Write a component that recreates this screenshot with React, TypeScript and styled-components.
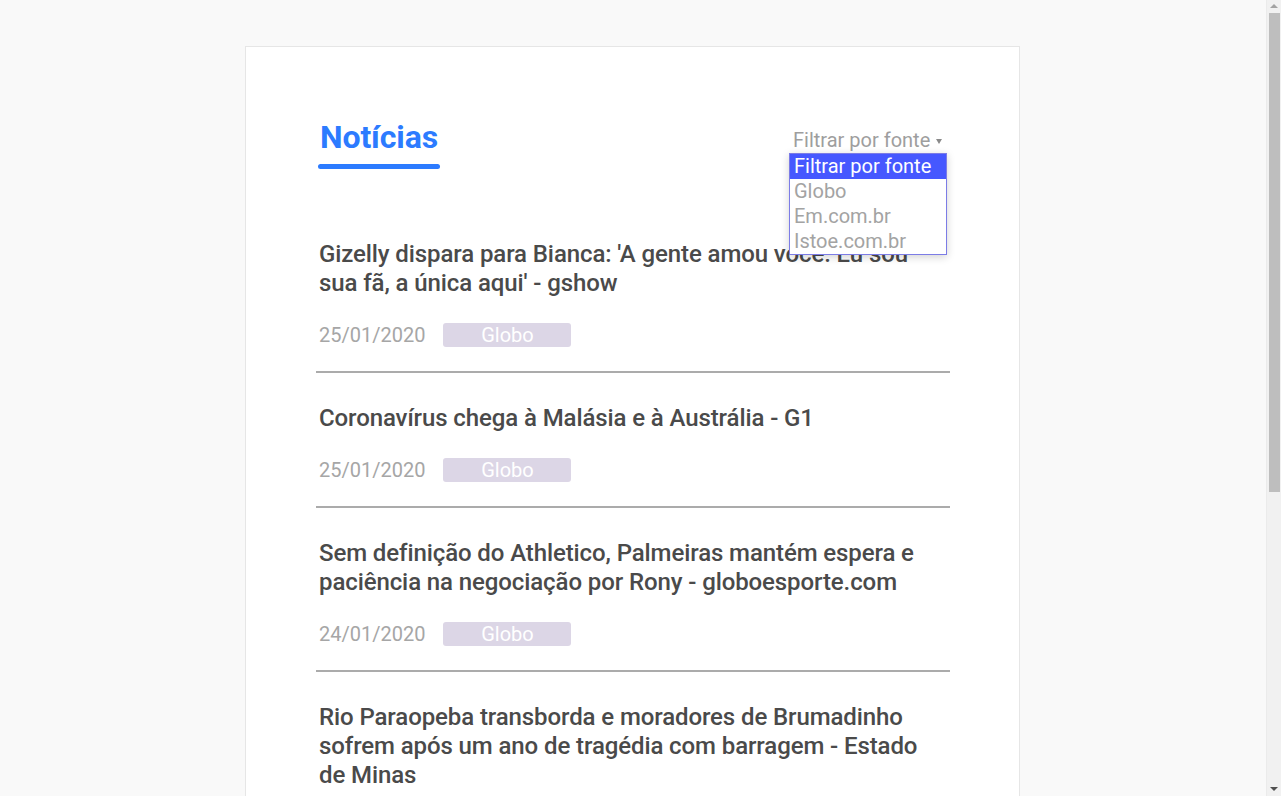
import React from "react";
import styled, { createGlobalStyle } from "styled-components";

const GlobalStyle = createGlobalStyle`
  html, body {
    margin: 0;
    padding: 0;
    background: #f9f9f9;
    font-family: Roboto, "Liberation Sans", sans-serif;
  }
  body { padding-right: 16px; }
  * { box-sizing: border-box; }
`;

const Scrollbar = styled.div`
  position: fixed;
  top: 0;
  right: 0;
  width: 15px;
  height: 100vh;
  background: #f1f1f1;
  border-left: 1px solid #ebebeb;
  display: flex;
  flex-direction: column;
  align-items: center;
  z-index: 10;
`;

const Arrow = styled.span<{ $down?: boolean }>`
  width: 0;
  height: 0;
  border-left: 4px solid transparent;
  border-right: 4px solid transparent;
  ${(p) =>
    p.$down
      ? "border-top: 4px solid #505050; margin-top: auto; margin-bottom: 5px;"
      : "border-bottom: 4px solid #a3a3a3; margin-top: 4px;"}
`;

const Thumb = styled.span`
  width: 11px;
  height: 479px;
  margin-top: 5px;
  background: #bebebe;
`;

const Card = styled.main`
  width: 775px;
  margin: 46px auto 40px;
  background: #ffffff;
  border: 1px solid #e6e6e6;
  padding: 72px 69px 40px 70px;
`;

const Header = styled.header`
  display: flex;
  justify-content: space-between;
  align-items: flex-start;
  padding-right: 3px;
`;

const TitleBlock = styled.div`
  display: flex;
  flex-direction: column;
  align-items: center;
  width: 122px;
  margin-left: 2px;
`;

const Heading = styled.h1`
  margin: 0;
  font-family: Roboto, "Liberation Sans", sans-serif;
  font-weight: 700;
  font-size: 32px;
  line-height: 36px;
  color: #2c7bff;
  letter-spacing: -0.1px;
`;

const Bar = styled.div`
  width: 122px;
  height: 5px;
  margin-top: 9px;
  border-radius: 3px;
  background: #2c7bff;
`;

const SelectWrap = styled.div`
  position: relative;
  width: 158px;
  margin-top: 9px;
`;

const SelectLabel = styled.div`
  display: flex;
  align-items: center;
  gap: 6px;
  font-size: 20px;
  line-height: 24px;
  color: #9e9e9e;
  padding-left: 4px;
`;

const Caret = styled.span`
  width: 0;
  height: 0;
  border-left: 3.5px solid transparent;
  border-right: 3.5px solid transparent;
  border-top: 5px solid #8a8a8a;
  margin-top: 2px;
`;

const Popup = styled.ul`
  position: absolute;
  top: 25px;
  left: 0;
  width: 158px;
  margin: 0;
  padding: 0;
  list-style: none;
  background: #ffffff;
  border: 1px solid #7c7ce6;
  box-shadow: 0 2px 8px rgba(0, 0, 0, 0.18);
  z-index: 5;
`;

const Option = styled.li<{ $selected?: boolean }>`
  height: 25px;
  padding-left: 4px;
  font-size: 20px;
  line-height: 24px;
  color: ${(p) => (p.$selected ? "#ffffff" : "#a3a3a3")};
  background: ${(p) => (p.$selected ? "#4658ff" : "transparent")};
`;

const List = styled.section`
  margin-top: 40px;
`;

const Item = styled.article`
  padding: 31px 0 24px;
  border-bottom: 2px solid #ababab;
`;

const ItemTitle = styled.h2`
  margin: 0;
  padding: 0 30px 0 3px;
  font-size: 24px;
  line-height: 29px;
  font-weight: 500;
  color: #4a4a4a;
  letter-spacing: -0.1px;
`;

const Meta = styled.div`
  display: flex;
  align-items: center;
  gap: 18px;
  margin-top: 25px;
  padding-left: 3px;
  height: 24px;
`;

const DateText = styled.span`
  font-size: 20px;
  line-height: 24px;
  color: #a6a6a6;
  font-weight: 400;
`;

const Badge = styled.span`
  display: inline-flex;
  align-items: center;
  justify-content: center;
  width: 128px;
  height: 24px;
  border-radius: 3px;
  background: #dcd6e6;
  color: #ffffff;
  font-size: 20px;
`;

const news = [
  {
    title: "Gizelly dispara para Bianca: 'A gente amou você. Eu sou sua fã, a única aqui' - gshow",
    date: "25/01/2020",
    source: "Globo",
  },
  {
    title: "Coronavírus chega à Malásia e à Austrália - G1",
    date: "25/01/2020",
    source: "Globo",
  },
  {
    title: "Sem definição do Athletico, Palmeiras mantém espera e paciência na negociação por Rony - globoesporte.com",
    date: "24/01/2020",
    source: "Globo",
  },
  {
    title: "Rio Paraopeba transborda e moradores de Brumadinho sofrem após um ano de tragédia com barragem - Estado de Minas",
    date: "24/01/2020",
    source: "Em.com.br",
  },
  {
    title: "Bolsonaro diz que vai ouvir Moro sobre recriação do Ministério da Segurança - IstoÉ",
    date: "24/01/2020",
    source: "Istoe.com.br",
  },
];

export default function App() {
  return (
    <>
      <GlobalStyle />
      <Card>
        <Header>
          <TitleBlock>
            <Heading>Notícias</Heading>
            <Bar />
          </TitleBlock>
          <SelectWrap>
            <SelectLabel>
              Filtrar por fonte <Caret />
            </SelectLabel>
            <Popup>
              <Option $selected>Filtrar por fonte</Option>
              <Option>Globo</Option>
              <Option>Em.com.br</Option>
              <Option>Istoe.com.br</Option>
            </Popup>
          </SelectWrap>
        </Header>
        <List>
          {news.map((n, i) => (
            <Item key={i}>
              <ItemTitle>{n.title}</ItemTitle>
              <Meta>
                <DateText>{n.date}</DateText>
                <Badge>{n.source}</Badge>
              </Meta>
            </Item>
          ))}
        </List>
      </Card>
      <Scrollbar aria-hidden>
        <Arrow />
        <Thumb />
        <Arrow $down />
      </Scrollbar>
    </>
  );
}
